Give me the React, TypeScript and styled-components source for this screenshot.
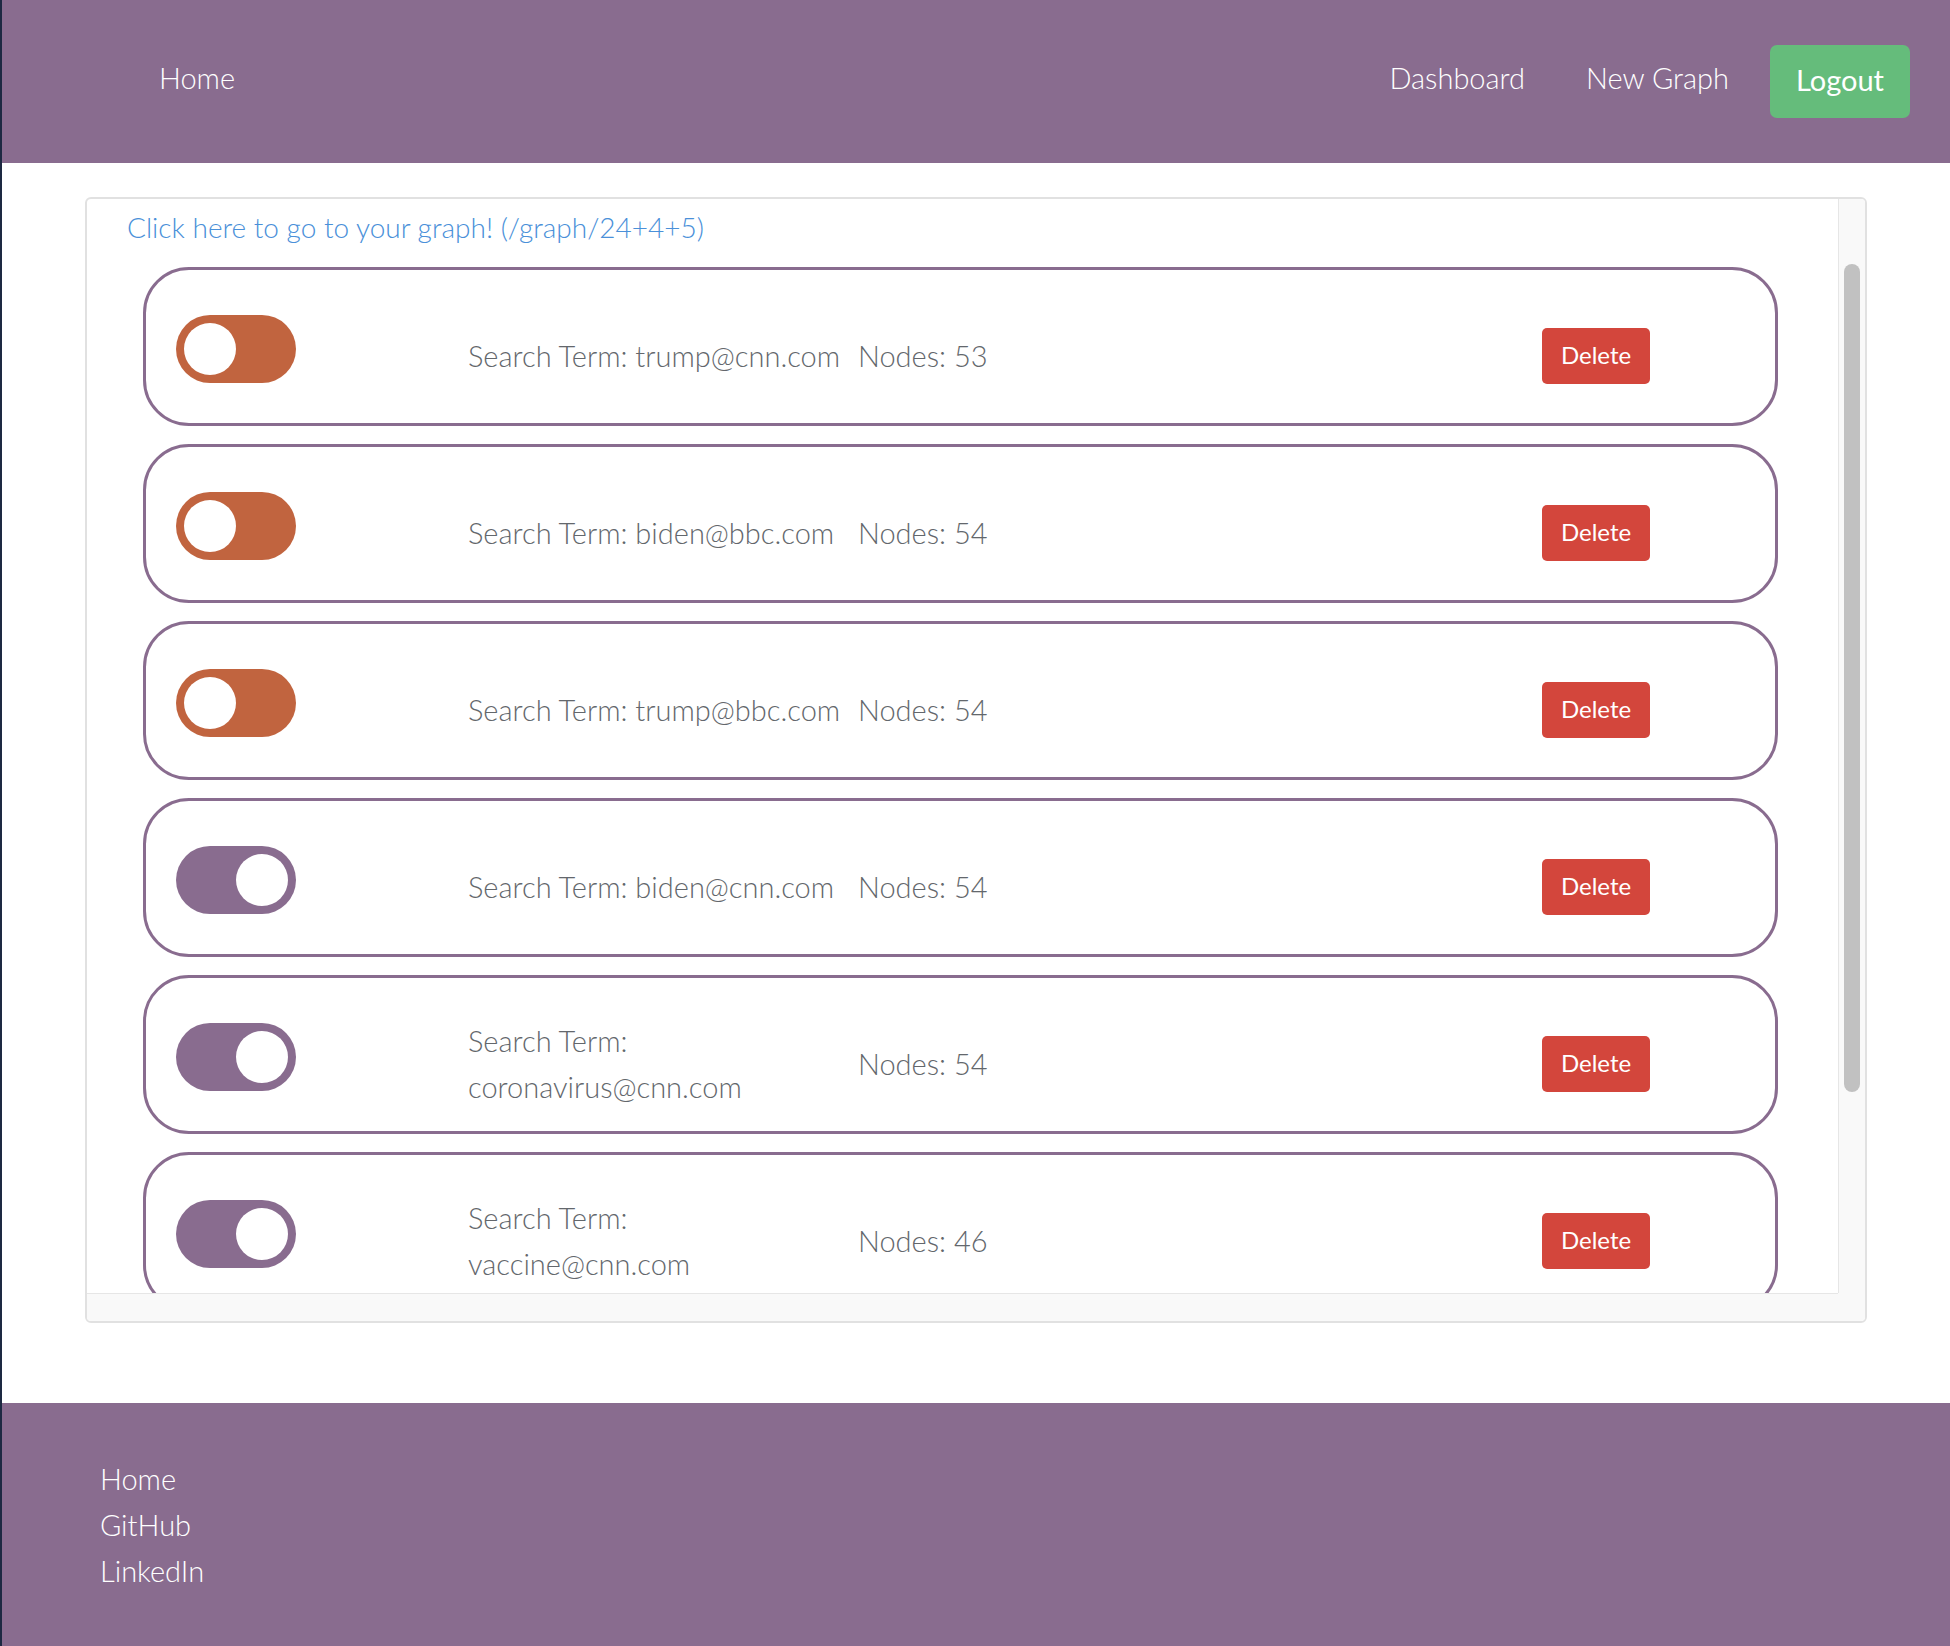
import React from "react";
import styled, { createGlobalStyle } from "styled-components";

const GlobalStyle = createGlobalStyle`
  html, body {
    margin: 0;
    padding: 0;
    background: #ffffff;
  }
  body {
    font-family: Lato, "Open Sans", "Liberation Sans", sans-serif;
  }
  *, *::before, *::after {
    box-sizing: border-box;
  }
`;

const PURPLE = "#896c8f";
const ORANGE = "#c1643f";

const Page = styled.div`
  min-height: 1646px;
  border-left: 2px solid #1d2942;
  display: flex;
  flex-direction: column;
`;

const Header = styled.header`
  height: 163px;
  background: ${PURPLE};
  display: flex;
  align-items: center;
  justify-content: space-between;
  padding: 0 40px 0 157px;
`;

const NavLink = styled.a<{ $space?: number }>`
  color: #ffffff;
  font-size: 29px;
  font-weight: 300;
  text-decoration: none;
  line-height: 40px;
  padding-bottom: 8px;
  margin-right: ${(p) => p.$space ?? 0}px;
`;

const RightNav = styled.nav`
  display: flex;
  align-items: center;
`;

const LogoutButton = styled.button`
  height: 73px;
  padding: 0 26px;
  background: #65bc7b;
  color: #ffffff;
  border: none;
  border-radius: 7px;
  font-family: inherit;
  font-size: 29px;
  font-weight: 400;
  padding-bottom: 4px;
`;

const Main = styled.main`
  padding: 34px 83px 80px 83px;
`;

const Card = styled.section`
  height: 1126px;
  border: 2px solid #e1e1e1;
  border-radius: 6px;
  overflow: hidden;
  display: grid;
  grid-template-columns: 1fr 27px;
  grid-template-rows: 1fr 28px;
`;

const Viewport = styled.div`
  overflow: hidden;
  padding-top: 5px;
`;

const GraphLink = styled.a`
  display: block;
  padding-left: 40px;
  color: #4a90d9;
  font-size: 28px;
  font-weight: 300;
  line-height: 46px;
  text-decoration: none;
`;

const RowList = styled.div`
  margin: 17px 0 0 56px;
  width: 1635px;
  display: flex;
  flex-direction: column;
  gap: 18px;
`;

const Row = styled.div`
  flex: none;
  height: 159px;
  border: 3px solid ${PURPLE};
  border-radius: 46px;
  display: grid;
  grid-template-columns: 292px 390px 1fr 108px;
  align-items: center;
  padding: 18px 125px 0 30px;
`;

const Toggle = styled.div<{ $on: boolean }>`
  width: 120px;
  height: 68px;
  margin-bottom: 14px;
  border-radius: 34px;
  padding: 8px;
  display: flex;
  justify-content: ${(p) => (p.$on ? "flex-end" : "flex-start")};
  background: ${(p) => (p.$on ? PURPLE : ORANGE)};
`;

const Knob = styled.span`
  width: 52px;
  height: 52px;
  border-radius: 50%;
  background: #ffffff;
`;

const RowText = styled.div<{ $pad?: number }>`
  color: #63676c;
  font-size: 29px;
  font-weight: 300;
  line-height: 46px;
  padding-right: ${(p) => p.$pad ?? 0}px;
`;

const DeleteButton = styled.button`
  width: 108px;
  height: 56px;
  background: #d3463c;
  color: #ffffff;
  border: none;
  border-radius: 5px;
  font-family: inherit;
  font-size: 24px;
  font-weight: 400;
  padding: 0 0 2px;
`;

const VTrack = styled.div`
  background: #f9f9f9;
  border-left: 1px solid #e6e6e6;
  padding: 65px 0 0 5px;
`;

const VThumb = styled.div`
  width: 16px;
  height: 828px;
  border-radius: 8px;
  background: #c1c1c1;
`;

const HTrack = styled.div`
  background: #f9f9f9;
  border-top: 1px solid #e6e6e6;
`;

const Corner = styled.div`
  background: #f9f9f9;
`;

const Footer = styled.footer`
  height: 243px;
  margin-top: auto;
  background: ${PURPLE};
  padding: 53px 0 0 98px;
  display: flex;
  flex-direction: column;
  align-items: flex-start;
`;

const FooterLink = styled.a`
  color: #ffffff;
  font-size: 29px;
  font-weight: 300;
  line-height: 46px;
  text-decoration: none;
`;

const graphs = [
  { term: "trump@cnn.com", nodes: 53, on: false },
  { term: "biden@bbc.com", nodes: 54, on: false },
  { term: "trump@bbc.com", nodes: 54, on: false },
  { term: "biden@cnn.com", nodes: 54, on: true },
  { term: "coronavirus@cnn.com", nodes: 54, on: true },
  { term: "vaccine@cnn.com", nodes: 46, on: true },
];

export default function App() {
  return (
    <>
      <GlobalStyle />
      <Page>
        <Header>
          <NavLink href="#">Home</NavLink>
          <RightNav>
            <NavLink href="#" $space={61}>
              Dashboard
            </NavLink>
            <NavLink href="#" $space={41}>
              New Graph
            </NavLink>
            <LogoutButton>Logout</LogoutButton>
          </RightNav>
        </Header>
        <Main>
          <Card>
            <Viewport>
              <GraphLink href="#">
                Click here to go to your graph! (/graph/24+4+5)
              </GraphLink>
              <RowList>
                {graphs.map((g) => (
                  <Row key={g.term}>
                    <Toggle $on={g.on}>
                      <Knob />
                    </Toggle>
                    <RowText $pad={10}>Search Term: {g.term}</RowText>
                    <RowText>Nodes: {g.nodes}</RowText>
                    <DeleteButton>Delete</DeleteButton>
                  </Row>
                ))}
              </RowList>
            </Viewport>
            <VTrack>
              <VThumb />
            </VTrack>
            <HTrack />
            <Corner />
          </Card>
        </Main>
        <Footer>
          <FooterLink href="#">Home</FooterLink>
          <FooterLink href="#">GitHub</FooterLink>
          <FooterLink href="#">LinkedIn</FooterLink>
        </Footer>
      </Page>
    </>
  );
}
